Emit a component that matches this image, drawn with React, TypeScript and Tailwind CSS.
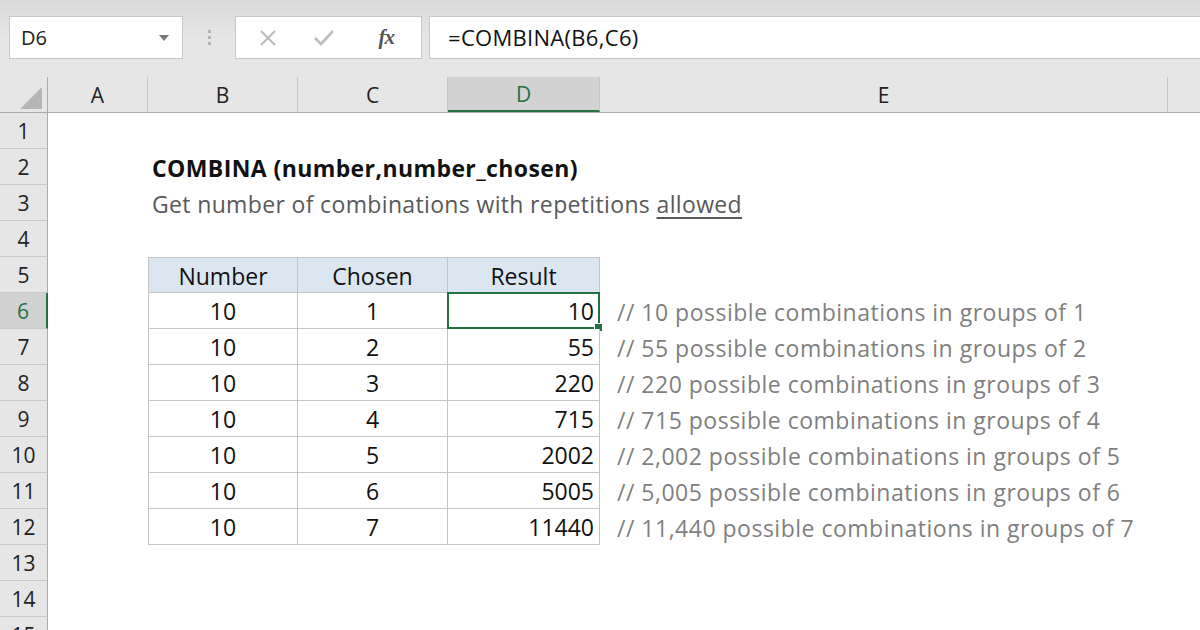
import React from "react";

const FONT = { fontFamily: "'Open Sans', 'Noto Sans', sans-serif" };

type Row = {
  n: number;
  b?: string;
  c?: string;
  d?: string;
  e?: string;
  kind?: "title" | "sub" | "head" | "data";
};

const rows: Row[] = [
  { n: 1 },
  { n: 2, kind: "title" },
  { n: 3, kind: "sub" },
  { n: 4 },
  { n: 5, kind: "head", b: "Number", c: "Chosen", d: "Result" },
  { n: 6, kind: "data", b: "10", c: "1", d: "10", e: "// 10 possible combinations in groups of 1" },
  { n: 7, kind: "data", b: "10", c: "2", d: "55", e: "// 55 possible combinations in groups of 2" },
  { n: 8, kind: "data", b: "10", c: "3", d: "220", e: "// 220 possible combinations in groups of 3" },
  { n: 9, kind: "data", b: "10", c: "4", d: "715", e: "// 715 possible combinations in groups of 4" },
  { n: 10, kind: "data", b: "10", c: "5", d: "2002", e: "// 2,002 possible combinations in groups of 5" },
  { n: 11, kind: "data", b: "10", c: "6", d: "5005", e: "// 5,005 possible combinations in groups of 6" },
  { n: 12, kind: "data", b: "10", c: "7", d: "11440", e: "// 11,440 possible combinations in groups of 7" },
  { n: 13 },
  { n: 14 },
  { n: 15 },
];

function Toolbar() {
  return (
    <div className="h-[77px] bg-[#e6e6e6] bg-gradient-to-b from-[#d9d9d9] via-[#e6e6e6] to-[#e6e6e6] flex items-start pt-[16px] pl-[9px]">
      <div className="w-[174px] h-[43px] bg-white border border-[#c6c6c6] flex items-center justify-between pl-[11px] pr-[13px]">
        <span className="text-[20px] text-[#222]">D6</span>
        <svg width="10" height="6" viewBox="0 0 10 6">
          <path d="M0 0 L10 0 L5 6 Z" fill="#7a7a7a" />
        </svg>
      </div>
      <div className="w-[52px] h-[43px] flex flex-col items-center justify-center gap-[3px]">
        <div className="w-[3px] h-[3px] bg-[#b3b3b3]" />
        <div className="w-[3px] h-[3px] bg-[#b3b3b3]" />
        <div className="w-[3px] h-[3px] bg-[#b3b3b3]" />
      </div>
      <div className="w-[187px] h-[43px] bg-white border border-[#c6c6c6] flex items-center">
        <div className="w-[60px] flex justify-center pl-[4px]">
          <svg width="18" height="18" viewBox="0 0 18 18">
            <path d="M2 2 L16 16 M16 2 L2 16" stroke="#bdbdbd" strokeWidth="2.2" />
          </svg>
        </div>
        <div className="w-[56px] flex justify-center">
          <svg width="22" height="18" viewBox="0 0 22 18">
            <path d="M2 9 L8 15 L20 2" stroke="#bdbdbd" strokeWidth="2.6" fill="none" />
          </svg>
        </div>
        <div className="w-[70px] flex justify-center">
          <span
            className="text-[21px] italic font-bold text-[#555] tracking-[-1px]"
            style={{ fontFamily: "'Liberation Serif', serif" }}
          >
            fx
          </span>
        </div>
      </div>
      <div className="w-[7px]" />
      <div className="flex-1 h-[43px] bg-white border border-[#c6c6c6] border-r-0 flex items-center pl-[18px]">
        <span className="text-[22px] tracking-[0.3px] text-[#111]">=COMBINA(B6,C6)</span>
      </div>
    </div>
  );
}

function ColumnHeaders() {
  const cols = [
    { l: "A", w: "w-[100px]" },
    { l: "B", w: "w-[150px]" },
    { l: "C", w: "w-[150px]" },
    { l: "D", w: "w-[152px]", sel: true },
    { l: "E", w: "w-[568px]" },
  ];
  return (
    <div className="flex h-[36px] bg-[#e6e6e6] border-b border-[#ababab]">
      <div className="w-[48px] h-full border-r border-[#ababab] relative flex items-end justify-end pr-[5px] pb-[3px]">
        <svg width="22" height="22" viewBox="0 0 22 22">
          <path d="M22 0 L22 22 L0 22 Z" fill="#b5b5b5" />
        </svg>
      </div>
      {cols.map((c) => (
        <div
          key={c.l}
          className={`${c.w} h-full flex items-center justify-center pt-[2px] text-[21px] border-r border-[#c6c6c6] ${
            c.sel
              ? "bg-[#d2d2d2] text-[#217346] border-b-2 border-b-[#217346]"
              : "text-[#222]"
          }`}
        >
          {c.l}
        </div>
      ))}
      <div className="flex-1 h-full" />
    </div>
  );
}

function SheetRow({ r }: { r: Row }) {
  const sel = r.n === 6;
  const inTable = r.kind === "head" || r.kind === "data";
  const tb = r.kind === "head" ? "border-t" : "";
  const cellBase = `h-full flex items-center pt-[2px] text-[23px] text-[#111] border-r border-b border-[#c4c4c4] ${tb}`;
  const headBg = r.kind === "head" ? "bg-[#dce6f1]" : "bg-white";
  return (
    <div className="flex h-[36px]">
      <div
        className={`w-[48px] h-full shrink-0 flex items-center justify-center pt-[2px] text-[21px] border-b border-[#c9c9c9] ${
          sel
            ? "bg-[#d2d2d2] text-[#217346] border-r-2 border-r-[#217346]"
            : "bg-[#e6e6e6] text-[#222] border-r border-r-[#ababab]"
        }`}
      >
        {r.n}
      </div>
      <div className="w-[100px] h-full shrink-0" />
      {inTable ? (
        <>
          <div className={`w-[150px] shrink-0 justify-center border-l ${cellBase} ${headBg}`}>{r.b}</div>
          <div className={`w-[150px] shrink-0 justify-center ${cellBase} ${headBg}`}>{r.c}</div>
          <div
            className={`w-[152px] shrink-0 relative ${cellBase} ${headBg} ${
              r.kind === "head" ? "justify-center" : "justify-end pr-[5px]"
            }`}
          >
            {r.d}
            {sel && (
              <div className="absolute -left-[1px] -top-[1px] w-[153px] h-[37px] border-2 border-[#217346]">
                <div className="absolute -right-[5px] -bottom-[5px] w-[9px] h-[9px] bg-[#217346] border border-white" />
              </div>
            )}
          </div>
          <div className="flex-1 h-full flex items-center pt-[2px] pl-[17px] text-[23px] tracking-[0.5px] text-[#7f7f7f] whitespace-nowrap">
            {r.e}
          </div>
        </>
      ) : r.kind === "title" ? (
        <div className="flex-1 h-full flex items-center pt-[2px] pl-[4px] text-[23px] tracking-[0.4px] font-bold text-[#111] whitespace-nowrap">
          COMBINA (number,number_chosen)
        </div>
      ) : r.kind === "sub" ? (
        <div className="flex-1 h-full flex items-center pt-[2px] pl-[4px] text-[23px] tracking-[0.35px] text-[#595959] whitespace-nowrap">
          Get number of combinations with repetitions&nbsp;
          <span className="underline underline-offset-[4px] decoration-[1.5px]">allowed</span>
        </div>
      ) : (
        <div className="flex-1 h-full" />
      )}
    </div>
  );
}

export default function App() {
  return (
    <div className="w-[1200px] h-[630px] overflow-hidden bg-white" style={FONT}>
      <Toolbar />
      <ColumnHeaders />
      {rows.map((r) => (
        <SheetRow key={r.n} r={r} />
      ))}
    </div>
  );
}
